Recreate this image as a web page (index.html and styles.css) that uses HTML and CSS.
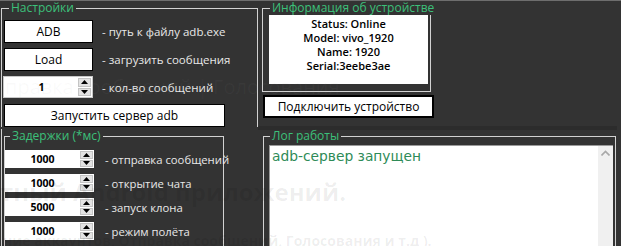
FILE: index.html
```html
<!DOCTYPE html>
<html lang="ru">
<head>
<meta charset="utf-8">
<title>ADB</title>
<link rel="stylesheet" href="styles.css">
</head>
<body>
<div class="app">
  <div class="left">
    <fieldset class="group settings">
      <legend>Настройки</legend>
      <div class="row r1">
        <div class="btn">ADB</div>
        <span class="lbl">- путь к файлу adb.exe</span>
      </div>
      <div class="row r2">
        <div class="btn">Load</div>
        <span class="lbl">- загрузить сообщения</span>
      </div>
      <div class="row r3">
        <div class="num big"><span class="val">1</span><div class="spin"><div class="sb up"><svg viewBox="0 0 7 4" width="7" height="4"><path d="M0 4L3.5 0L7 4Z"/></svg></div><div class="sb dn"><svg viewBox="0 0 7 4" width="7" height="4"><path d="M0 0L3.5 4L7 0Z"/></svg></div></div></div>
        <span class="lbl">- кол-во сообщений</span>
      </div>
      <div class="row r4">
        <div class="btn wide">Запустить сервер adb</div>
      </div>
    </fieldset>
    <div class="rest">
      <fieldset class="group delays">
        <legend>Задержки (*мс)</legend>
        <div class="drow">
          <div class="num"><span class="val">1000</span><div class="spin"><div class="sb up"><svg viewBox="0 0 7 4" width="7" height="4"><path d="M0 4L3.5 0L7 4Z"/></svg></div><div class="sb dn"><svg viewBox="0 0 7 4" width="7" height="4"><path d="M0 0L3.5 4L7 0Z"/></svg></div></div></div>
          <span class="lbl">- отправка сообщений</span>
        </div>
        <div class="drow">
          <div class="num"><span class="val">1000</span><div class="spin"><div class="sb up"><svg viewBox="0 0 7 4" width="7" height="4"><path d="M0 4L3.5 0L7 4Z"/></svg></div><div class="sb dn"><svg viewBox="0 0 7 4" width="7" height="4"><path d="M0 0L3.5 4L7 0Z"/></svg></div></div></div>
          <span class="lbl">- открытие чата</span>
        </div>
        <div class="drow">
          <div class="num"><span class="val">5000</span><div class="spin"><div class="sb up"><svg viewBox="0 0 7 4" width="7" height="4"><path d="M0 4L3.5 0L7 4Z"/></svg></div><div class="sb dn"><svg viewBox="0 0 7 4" width="7" height="4"><path d="M0 0L3.5 4L7 0Z"/></svg></div></div></div>
          <span class="lbl">- запуск клона</span>
        </div>
        <div class="drow">
          <div class="num"><span class="val">1000</span><div class="spin"><div class="sb up"><svg viewBox="0 0 7 4" width="7" height="4"><path d="M0 4L3.5 0L7 4Z"/></svg></div><div class="sb dn"><svg viewBox="0 0 7 4" width="7" height="4"><path d="M0 0L3.5 4L7 0Z"/></svg></div></div></div>
          <span class="lbl">- режим полёта</span>
        </div>
      </fieldset>
    </div>
  </div>
  <div class="right">
    <fieldset class="group info">
      <legend>Информация об устройстве</legend>
      <div class="info-box">
        <div>Status: Online</div>
        <div>Model: vivo_1920</div>
        <div>Name: 1920</div>
        <div>Serial:3eebe3ae</div>
      </div>
    </fieldset>
    <div class="connect">Подключить устройство</div>
    <fieldset class="group log">
      <legend>Лог работы</legend>
      <div class="logbox">
        <div class="logtext">adb-сервер запущен</div>
        <div class="vscroll"><svg viewBox="0 0 9 6" width="9" height="6"><path d="M0.5 5.5L4.5 1.5L8.5 5.5" fill="none" stroke="#a8a8a8" stroke-width="1.6"/></svg></div>
      </div>
    </fieldset>
  </div>
</div>
<div class="ghost" aria-hidden="true">
  <div class="g1">правка сообщений | Голосования</div>
  <div class="g2">тный Android приложений.</div>
  <div class="g3">ние аккаунтов, Отправка сообщений, Голосования и т.д ).</div>
  <div class="gband"></div>
</div>
</body>
</html>
```
FILE: styles.css
```css
* { box-sizing: border-box; }
html, body { margin: 0; padding: 0; }
body {
  width: 621px;
  height: 246px;
  overflow: hidden;
  background: #333333;
  border-top: 1px solid #6e6e6e;
  font-family: "Open Sans", "Noto Sans", sans-serif;
  color: #e8e8e8;
  position: relative;
}
.app { display: flex; align-items: flex-start; }

.left { width: 257px; margin-left: 1px; flex: none; }
.right { margin-left: 4px; flex: none; }

.group {
  margin: 0;
  padding: 0;
  border: 1px solid #d2d2d2;
  min-width: 0;
}
.group legend {
  padding: 0 2px;
  font-size: 12px;
  line-height: 14px;
  color: #3cc07a;
  white-space: nowrap;
}

/* settings */
.settings { width: 257px; border-bottom: 0; padding: 0; }
.settings legend { margin-left: 7px; }
.row { display: flex; align-items: center; }
.r1 { margin-top: 5px; }
.r2 { margin-top: 5px; }
.r3 { margin-top: 5px; }
.r4 { margin-top: 6px; }

.btn {
  flex: none;
  width: 89px;
  height: 23px;
  margin-left: 2px;
  background: #fff;
  border: 1px solid #000;
  color: #000;
  font-size: 12px;
  display: flex;
  align-items: center;
  justify-content: center;
}
.btn.wide { width: 221px; }
.lbl { flex: none; font-size: 11.5px; margin-left: 9px; white-space: nowrap; }

.num {
  flex: none;
  width: 89px;
  height: 18px;
  background: #fff;
  display: flex;
  align-items: stretch;
  padding: 1px 1px 1px 0;
}
.num.big { width: 90px; height: 22px; margin-left: 1px; padding: 1px; border: 1px solid #c8c8c8; }
.val {
  flex: 1;
  display: flex;
  align-items: center;
  justify-content: center;
  color: #000;
  font-size: 10.5px;
  font-weight: 700;
}
.spin { width: 13px; display: flex; flex-direction: column; gap: 1px; }
.sb {
  flex: 1;
  background: #e3e3e3;
  border: 1px solid #c4c4c4;
  display: flex;
  align-items: center;
  justify-content: center;
}
.sb svg { fill: #000; display: block; }

/* delays */
.rest { border-left: 1px solid #d2d2d2; height: 130px; }
.delays {
  width: 220px;
  margin: 2px 0 0 2px;
  padding: 7px 0 0 0;
  border-bottom: 0;
  height: 130px;
}
.delays legend { margin-left: 5px; }
.drow { display: flex; align-items: center; margin-bottom: 6px; }
.drow .lbl { margin-left: 11px; font-size: 11.3px; }

/* right */
.info {
  width: 169px;
  padding: 0 2px 7px 6px;
}
.info legend { margin-left: 1px; }
.info-box {
  width: 159px;
  height: 69px;
  background: #fff;
  color: #000;
  text-align: center;
  font-size: 11px;
  font-weight: 600;
  line-height: 14px;
  padding-top: 2px;
}
.connect {
  width: 171px;
  height: 23px;
  margin: 3px 0 0 1px;
  background: #fff;
  border: 2px solid #000;
  color: #000;
  font-size: 12px;
  display: flex;
  align-items: center;
  justify-content: center;
}
.log {
  width: 353px;
  margin: 11px 0 0 1px;
  padding: 2px 2px 0 5px;
  border-bottom: 0;
  height: 130px;
}
.log legend { margin-left: 1px; }
.logbox {
  width: 344px;
  height: 120px;
  background: #fff;
  border-left: 1px solid #9a9a9a;
  border-top: 1px solid #9a9a9a;
  display: flex;
}
.logtext {
  flex: 1;
  color: #2e8b57;
  font-family: "DejaVu Sans", sans-serif;
  font-size: 13.8px;
  line-height: 18px;
  padding: 1px 0 0 2px;
}
.vscroll {
  width: 15px;
  background: #f0f0f0;
  display: flex;
  justify-content: center;
  padding-top: 4px;
}
.vscroll svg { display: block; }

/* faint background showing through the window */
.ghost { position: absolute; inset: 0; pointer-events: none; overflow: hidden; }
.g1 {
  position: absolute; left: 5px; top: 72px;
  font-size: 20px; white-space: nowrap;
  color: rgba(160, 160, 160, 0.06);
}
.g2 {
  position: absolute; left: 0; top: 174px;
  font-size: 24px; font-weight: 700; white-space: nowrap;
  color: rgba(0, 0, 0, 0.07);
}
.g3 {
  position: absolute; left: 3px; top: 230px;
  font-size: 14px; font-weight: 700; white-space: nowrap;
  color: rgba(0, 0, 0, 0.07);
}
.gband {
  position: absolute; left: 258px; top: 125px; width: 359px; height: 4px;
  background: rgba(0, 0, 0, 0.12);
}
```
